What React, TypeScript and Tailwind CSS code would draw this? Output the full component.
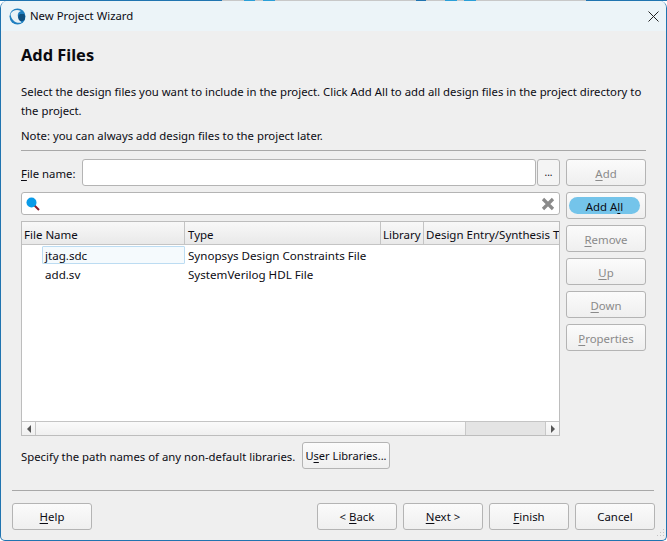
import React from "react";

const Btn = ({ children, disabled, className = "" }: { children: React.ReactNode; disabled?: boolean; className?: string }) => (
  <div
    className={`flex h-[27px] w-[80px] shrink-0 items-center justify-center rounded-[3px] border border-[#b4b4b4] bg-gradient-to-b from-[#fbfbfb] to-[#efefef] text-[11.4px] ${
      disabled ? "text-[#8a8a8a]" : "text-[#0c0c14]"
    } ${className}`}
  >
    {children}
  </div>
);

const U = ({ children }: { children: React.ReactNode }) => <span className="underline underline-offset-2">{children}</span>;

const Col = ({ w, children, last }: { w: string; children: React.ReactNode; last?: boolean }) => (
  <div className={`flex h-full shrink-0 items-center overflow-hidden whitespace-nowrap pt-[3px] ${w} ${last ? "" : "border-r border-[#c4c4c4]"}`}>{children}</div>
);

export default function App() {
  return (
    <div className="relative flex h-[541px] w-[667px] flex-col overflow-hidden bg-white text-[11.35px] text-[#0c0c14] [font-family:'Noto_Sans',sans-serif]">
      <div className="flex h-[1px] shrink-0">
        <div className="w-[222px] bg-[#2074b0]" />
        <div className="w-[22px] bg-[#c8c8c8]" />
        <div className="w-[11px] bg-[#2a9fd8]" />
        <div className="w-[8px] bg-[#c8c8c8]" />
        <div className="w-[12px] bg-[#2a9fd8]" />
        <div className="w-[141px] bg-[#c8c8c8]" />
        <div className="w-[10px] bg-[#2074b0]" />
        <div className="w-[19px] bg-[#c8c8c8]" />
        <div className="w-[12px] bg-[#2a9fd8]" />
        <div className="w-[7px] bg-[#c8c8c8]" />
        <div className="w-[12px] bg-[#2a9fd8]" />
        <div className="w-[110px] bg-[#c8c8c8]" />
        <div className="flex-1 bg-[#2074b0]" />
      </div>
      <div className="flex flex-1 flex-col overflow-hidden rounded-t-[7px] rounded-b-[5px] border-x border-b border-[#2074b0] bg-[#efefef]">
        {/* title bar */}
        <div className="flex h-[30px] shrink-0 items-center bg-[#ecf4f8] pl-[8px] pr-[4px]">
          <svg width="17" height="17" viewBox="0 0 17 17" className="shrink-0">
            <circle cx="8.5" cy="8.5" r="8" fill="#1f7fc0" />
            <path d="M1.5 6 C3.5 2 8 1 12 3 C9 4 8 7 9.5 10 C10 11.5 11 13 12.5 14.5 C7 16 2 12 1.5 6 Z" fill="#e8f1f6" />
            <path d="M11 6 h4 a2.5 2.5 0 0 1 1 2 v3 a3 3 0 0 1 -3 2 h-1.500 a4 4 0 0 1 -0.500 -7 z" fill="#0f4f80" />
          </svg>
          <span className="ml-[4px]">New Project Wizard</span>
          <svg width="11" height="11" viewBox="0 0 11 11" className="ml-auto mr-[3px]">
            <path d="M0.5 0.5 L10.5 10.5 M10.5 0.5 L0.5 10.5" stroke="#222" strokeWidth="1" />
          </svg>
        </div>
        {/* header */}
        <div className="flex flex-1 flex-col px-[11px] pb-[10px]">
          <div className="flex flex-1 flex-col px-[9px]">
            <h1 className="mt-[12px] h-[24px] text-[16.4px] font-bold leading-[24px] text-[#0a0a10]">Add Files</h1>
            <p className="mt-[15px] w-[640px] leading-[19px]">
              Select the design files you want to include in the project. Click Add All to add all design files in the project directory to the project.
            </p>
            <p className="mt-[6px] h-[19px] leading-[19px]">Note: you can always add design files to the project later.</p>
            <div className="mt-[5px] h-px w-[625px] bg-[#a8a8a8]" />
            <div className="mt-[8px] flex gap-[6px]">
              {/* left */}
              <div className="flex w-[539px] flex-col">
                <div className="flex h-[27px] items-center">
                  <span className="w-[61px] shrink-0 pt-[2px]">
                    <U>F</U>ile name:
                  </span>
                  <div className="h-full flex-1 rounded-[3px] border border-[#b4b4b4] bg-white" />
                  <div className="ml-px flex h-full w-[23px] shrink-0 items-center justify-center rounded-[3px] border border-[#b4b4b4] bg-[#f4f4f4] text-[10px]">...</div>
                </div>
                <div className="mt-[6px] flex h-[23px] items-center justify-between rounded-[3px] border border-[#b4b4b4] bg-white pl-[4px] pr-[4px]">
                  <svg width="14" height="14" viewBox="0 0 14 14">
                    <path d="M8.500 8.500 L13 13" stroke="#8a1c2c" strokeWidth="2" />
                    <circle cx="5.500" cy="5.500" r="5" fill="#0a9be8" />
                  </svg>
                  <svg width="14" height="14" viewBox="0 0 14 14">
                    <path d="M2 2 L12 12 M12 2 L2 12" stroke="#8a8a8a" strokeWidth="3.2" />
                  </svg>
                </div>
                <div className="mt-[6px] flex h-[215px] flex-col border border-[#bdbdbd] bg-white text-[11.6px]">
                  <div className="flex h-[23px] shrink-0 border-b border-[#c4c4c4] bg-gradient-to-b from-[#f8f8f8] to-[#e9e9e9] text-[11.5px]">
                    <Col w="w-[163px] pl-[2px]">File Name</Col>
                    <Col w="w-[196px] pl-[3px]">Type</Col>
                    <Col w="w-[43px] pl-[2px]">Library</Col>
                    <Col w="flex-1 min-w-0 pl-[2px]" last>
                      Design Entry/Synthesis Tool
                    </Col>
                  </div>
                  <div className="mt-px flex h-[18px] shrink-0 items-center">
                    <div className="ml-[20px] flex h-[18px] w-[143px] items-center rounded-[1px] border border-[#bcdcf2] bg-[#f5fafd] pl-[2px] pt-px">jtag.sdc</div>
                    <span className="ml-[3px] pt-px">Synopsys Design Constraints File</span>
                  </div>
                  <div className="mt-px flex h-[19px] shrink-0 items-center">
                    <span className="ml-[23px] w-[143px]">add.sv</span>
                    <span>SystemVerilog HDL File</span>
                  </div>
                  <div className="mt-auto flex h-[14px] shrink-0 border-t border-[#c4c4c4] bg-gradient-to-b from-[#fafafa] to-[#f0f0f0]">
                    <div className="flex w-[14px] items-center justify-center border-r border-[#c8c8c8]">
                      <div className="h-0 w-0 border-y-[4px] border-r-[4px] border-y-transparent border-r-[#555]" />
                    </div>
                    <div className="flex-1" />
                    <div className="w-[81px] border-x border-[#c8c8c8] bg-[#e4e4e4]" />
                    <div className="flex w-[13px] items-center justify-center">
                      <div className="h-0 w-0 border-y-[4px] border-l-[4px] border-y-transparent border-l-[#555]" />
                    </div>
                  </div>
                </div>
                <div className="mt-[6px] flex h-[27px] items-center">
                  <span className="w-[281px] shrink-0 whitespace-nowrap pt-[3px]">Specify the path names of any non-default libraries.</span>
                  <Btn className="w-[88px] pt-[2px]">
                    <span className="text-[11.1px]">
                      U<U>s</U>er Libraries...
                    </span>
                  </Btn>
                </div>
              </div>
              {/* right buttons */}
              <div className="flex w-[80px] flex-col gap-[6px]">
                <Btn disabled className="pt-[2px]">
                  <span>
                    <U>A</U>dd
                  </span>
                </Btn>
                <Btn className="justify-start pl-[2px]">
                  <span className="flex h-[17px] w-[71px] items-center justify-center rounded-full bg-[#74c4ea] pt-[2px]">
                    <span>
                      Add A<U>l</U>l
                    </span>
                  </span>
                </Btn>
                <Btn disabled className="pt-[2px]">
                  <span>
                    <U>R</U>emove
                  </span>
                </Btn>
                <Btn disabled className="pt-[2px]">
                  <span>
                    <U>U</U>p
                  </span>
                </Btn>
                <Btn disabled className="pt-[2px]">
                  <span>
                    <U>D</U>own
                  </span>
                </Btn>
                <Btn disabled className="pt-[2px]">
                  <span>
                    <U>P</U>roperties
                  </span>
                </Btn>
              </div>
            </div>
          </div>
          {/* footer */}
          <div className="h-px w-[642px] bg-[#a8a8a8]" />
          <div className="mt-[12px] flex gap-[6px]">
            <Btn className="mr-auto">
              <span>
                <U>H</U>elp
              </span>
            </Btn>
            <Btn>
              <span>
                &lt; <U>B</U>ack
              </span>
            </Btn>
            <Btn className="border-[#58b4ec] from-[#f8fbfd] to-[#e4ecf2]">
              <span>
                <U>N</U>ext &gt;
              </span>
            </Btn>
            <Btn>
              <span>
                <U>F</U>inish
              </span>
            </Btn>
            <Btn>Cancel</Btn>
          </div>
        </div>
      </div>
      <svg width="10" height="10" viewBox="0 0 10 10" className="absolute bottom-[2px] right-[2px]" fill="#c4c4c4">
        <rect x="8" y="0" width="1" height="1" />
        <rect x="5" y="3" width="1" height="1" />
        <rect x="8" y="3" width="1" height="1" />
        <rect x="2" y="6" width="1" height="1" />
        <rect x="5" y="6" width="1" height="1" />
        <rect x="8" y="6" width="1" height="1" />
      </svg>
    </div>
  );
}
